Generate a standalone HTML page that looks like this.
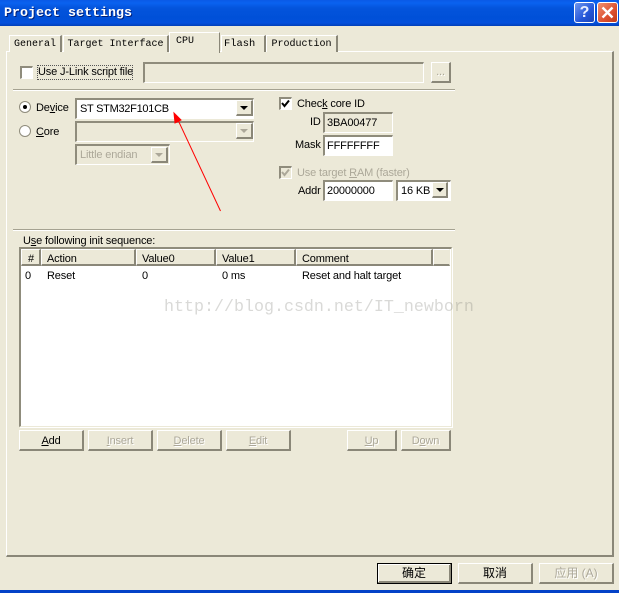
<!DOCTYPE html>
<html><head><meta charset="utf-8">
<style>
html,body{margin:0;padding:0;width:619px;height:593px;overflow:hidden;background:#ece9d8}
div,span.a{position:absolute;box-sizing:border-box}
body{font:11px/13px "Liberation Sans","Noto Sans CJK SC",sans-serif;color:#000;letter-spacing:-.15px}
.t{white-space:nowrap}
.dis{color:#aca899;text-shadow:1px 1px 0 #fff}
u{text-decoration:underline}
.tab{font:10px/14px "Liberation Mono",monospace;letter-spacing:0;background:#ece9d8;border-top:1px solid #fff;border-left:1px solid #fff;border-right:2px solid #8a8778;text-align:center;white-space:nowrap}
.sunk{border-top:2px solid #8f8c7c;border-left:2px solid #8f8c7c;border-right:1px solid #fff;border-bottom:1px solid #fff;background:#ece9d8;padding-left:2px;line-height:18px;white-space:nowrap}
.w{background:#fff}
.btn{background:#ece9d8;border-top:1px solid #fff;border-left:1px solid #fff;border-right:2px solid #8a8778;border-bottom:2px solid #8a8778;text-align:center;line-height:21px;white-space:nowrap}
.sep{height:2px;border-top:1px solid #a5a291;border-bottom:1px solid #fff}
.cb{width:13px;height:13px;border-top:2px solid #8f8c7c;border-left:2px solid #8f8c7c;border-right:1px solid #fff;border-bottom:1px solid #fff;background:#fff}
.arr{background:#ece9d8;border-top:1px solid #fff;border-left:1px solid #fff;border-right:2px solid #8a8778;border-bottom:2px solid #8a8778;width:17px;height:16px}
.arr:after{content:"";position:absolute;left:3px;top:5px;border-left:4px solid transparent;border-right:4px solid transparent;border-top:4px solid #000}
.arr.d:after{border-top-color:#aca899}
.hd{top:249px;height:17px;background:#ece9d8;border-top:1px solid #fff;border-left:1px solid #fff;border-right:2px solid #8a8778;border-bottom:2px solid #8a8778;line-height:16px;padding-top:1px;padding-left:5px;white-space:nowrap}
</style></head><body>

<div style="left:0;top:0;width:619px;height:26px;background:linear-gradient(180deg,#0a5ae6 0,#0a62f0 3px,#0454dc 8px,#0050d8 18px,#0450dc 23px,#0340b8 26px)"></div>
<div class="t" style="left:4px;top:6px;color:#fff;font:bold 13.33px/16px 'Liberation Mono',monospace;letter-spacing:0;text-shadow:1px 1px 0 #00207a">Project settings</div>

<div style="left:574px;top:2px;width:21px;height:21px;border:1px solid #fff;border-radius:3px;background:linear-gradient(135deg,#6f96ee,#2456d8 60%,#1c44b8);color:#e8eeff;font:bold 16px/19px 'Liberation Sans',sans-serif;letter-spacing:0;text-align:center">?</div>
<div style="left:597px;top:2px;width:21px;height:21px;border:1px solid #fff;border-radius:3px;background:linear-gradient(135deg,#ee9070,#dc5030 60%,#c03a18)">
<svg width="19" height="19" style="position:absolute;left:0;top:0"><path d="M4.5 4.5L14.5 14.5M14.5 4.5L4.5 14.5" stroke="#fff" stroke-width="2.4"/></svg></div>

<!-- panel -->
<div style="left:6px;top:51px;width:608px;height:506px;background:#ece9d8;border-top:1px solid #fff;border-left:1px solid #fff;border-right:2px solid #8a8778;border-bottom:2px solid #8a8778"></div>

<!-- tabs -->
<div class="tab" style="left:9px;top:35px;width:53px;height:17px;line-height:17px">General</div>
<div class="tab" style="left:63px;top:35px;width:106px;height:17px;line-height:17px">Target Interface</div>
<div class="tab" style="left:169px;top:32px;width:51px;height:21px;text-align:left;padding-left:6px;line-height:18px;border-right-width:1px">CPU</div>
<div style="left:219px;top:33px;width:1px;height:18px;background:#8a8778"></div>
<div class="tab" style="left:221px;top:35px;width:45px;height:17px;line-height:17px;text-align:left;padding-left:2px;font-size:10.4px">Flash</div>
<div class="tab" style="left:266px;top:35px;width:72px;height:17px;line-height:17px">Production</div>

<!-- script file -->
<div class="cb" style="left:20px;top:66px"></div>
<div class="t" style="left:37px;top:65px;width:96px;height:15px;outline:1px dotted #555;outline-offset:-1px;padding-left:1px;line-height:14px">Use J-Link script file</div>
<div class="sunk" style="left:143px;top:62px;width:281px;height:21px"></div>
<div class="btn dis" style="left:431px;top:62px;width:20px;height:21px;line-height:19px">...</div>
<div class="sep" style="left:13px;top:89px;width:442px"></div>

<!-- device -->
<div style="left:19px;top:101px;width:12px;height:12px;border-radius:50%;background:#fff;border:1px solid #8f8c7c"></div>
<div style="left:23px;top:105px;width:4px;height:4px;border-radius:50%;background:#000"></div>
<div class="t" style="left:36px;top:102px">De<u>v</u>ice</div>
<div class="sunk w" style="left:75px;top:98px;width:179px;height:21px;padding-left:3px;letter-spacing:-.28px">ST STM32F101CB</div>
<div class="arr" style="left:236px;top:100px"></div>

<div style="left:19px;top:125px;width:12px;height:12px;border-radius:50%;background:#fff;border:1px solid #8f8c7c"></div>
<div class="t" style="left:36px;top:126px"><u>C</u>ore</div>
<div class="sunk" style="left:75px;top:121px;width:179px;height:21px"></div>
<div class="arr d" style="left:236px;top:123px"></div>

<div class="sunk dis" style="left:75px;top:144px;width:95px;height:21px;text-shadow:none;padding-left:3px">Little endian</div>
<div class="arr d" style="left:151px;top:147px"></div>

<!-- arrow -->
<svg width="619" height="593" style="position:absolute;left:0;top:0;z-index:5;pointer-events:none"><path d="M220.5 211L178 120" stroke="#f00" stroke-width="1" fill="none"/><path d="M174 113L181 120L175 123Z" fill="#f00" stroke="#f00"/></svg>

<!-- right -->
<div class="cb" style="left:279px;top:97px"></div>
<svg width="13" height="13" style="position:absolute;left:279px;top:97px"><path d="M3 6L5.5 9L10 3.5" stroke="#000" stroke-width="2" fill="none"/></svg>
<div class="t" style="left:297px;top:98px">Chec<u>k</u> core ID</div>
<div class="t" style="left:310px;top:116px">ID</div>
<div class="sunk" style="left:323px;top:112px;width:70px;height:21px">3BA00477</div>
<div class="t" style="left:295px;top:139px">Mask</div>
<div class="sunk w" style="left:323px;top:135px;width:70px;height:21px">FFFFFFFF</div>
<div class="cb" style="left:279px;top:166px;background:#ece9d8"></div>
<svg width="13" height="13" style="position:absolute;left:279px;top:166px"><path d="M3 6L5.5 9L10 3.5" stroke="#aca899" stroke-width="2" fill="none"/></svg>
<div class="t" style="left:297px;top:167px;color:#aca899">Use target <u>R</u>AM (faster)</div>
<div class="t" style="left:298px;top:185px">Addr</div>
<div class="sunk w" style="left:323px;top:180px;width:70px;height:21px">20000000</div>
<div class="sunk w" style="left:396px;top:180px;width:55px;height:21px;padding-left:3px">16 KB</div>
<div class="arr" style="left:432px;top:182px;width:16px"></div>

<div class="sep" style="left:13px;top:229px;width:442px"></div>
<div class="t" style="left:23px;top:235px">U<u>s</u>e following init sequence:</div>

<!-- list -->
<div style="left:19px;top:247px;width:433px;height:180px;background:#fff;border-top:2px solid #8f8c7c;border-left:2px solid #8f8c7c;border-right:1px solid #ece9d8;border-bottom:1px solid #ece9d8;box-shadow:1px 1px 0 #fff"></div>
<div class="hd" style="left:21px;width:20px;padding-left:6px">#</div>
<div class="hd" style="left:41px;width:95px">Action</div>
<div class="hd" style="left:136px;width:80px">Value0</div>
<div class="hd" style="left:216px;width:80px">Value1</div>
<div class="hd" style="left:296px;width:137px">Comment</div>
<div class="hd" style="left:433px;width:17px;border-right:1px solid #ece9d8"></div>
<div class="t" style="left:25px;top:270px">0</div>
<div class="t" style="left:47px;top:270px">Reset</div>
<div class="t" style="left:142px;top:270px">0</div>
<div class="t" style="left:222px;top:270px">0 ms</div>
<div class="t" style="left:302px;top:270px">Reset and halt target</div>

<!-- watermark -->
<div class="t" style="left:164px;top:298px;z-index:6;color:rgba(120,120,110,.28);font:16.67px/20px 'Liberation Mono',monospace;letter-spacing:0">http://blog.csdn.net/IT_newborn</div>

<!-- buttons -->
<div class="btn" style="left:19px;top:430px;width:65px;height:21px"><u>A</u>dd</div>
<div class="btn dis" style="left:88px;top:430px;width:65px;height:21px"><u>I</u>nsert</div>
<div class="btn dis" style="left:157px;top:430px;width:65px;height:21px"><u>D</u>elete</div>
<div class="btn dis" style="left:226px;top:430px;width:65px;height:21px"><u>E</u>dit</div>
<div class="btn dis" style="left:347px;top:430px;width:50px;height:21px"><u>U</u>p</div>
<div class="btn dis" style="left:401px;top:430px;width:50px;height:21px">D<u>o</u>wn</div>

<div class="btn" style="left:377px;top:563px;width:75px;height:21px;line-height:19px;outline:1px solid #000;outline-offset:-1px;font-size:12px;letter-spacing:0;box-shadow:inset 1px 1px 0 #fff,inset -1px -1px 0 #8a8778">确定</div>
<div class="btn" style="left:458px;top:563px;width:75px;height:21px;line-height:19px;font-size:12px;letter-spacing:0">取消</div>
<div class="btn dis" style="left:539px;top:563px;width:75px;height:21px;line-height:19px;font-size:12px;letter-spacing:0">应用 (A)</div>

<div style="left:0;top:590px;width:619px;height:3px;background:#0442c8"></div>
</body></html>
